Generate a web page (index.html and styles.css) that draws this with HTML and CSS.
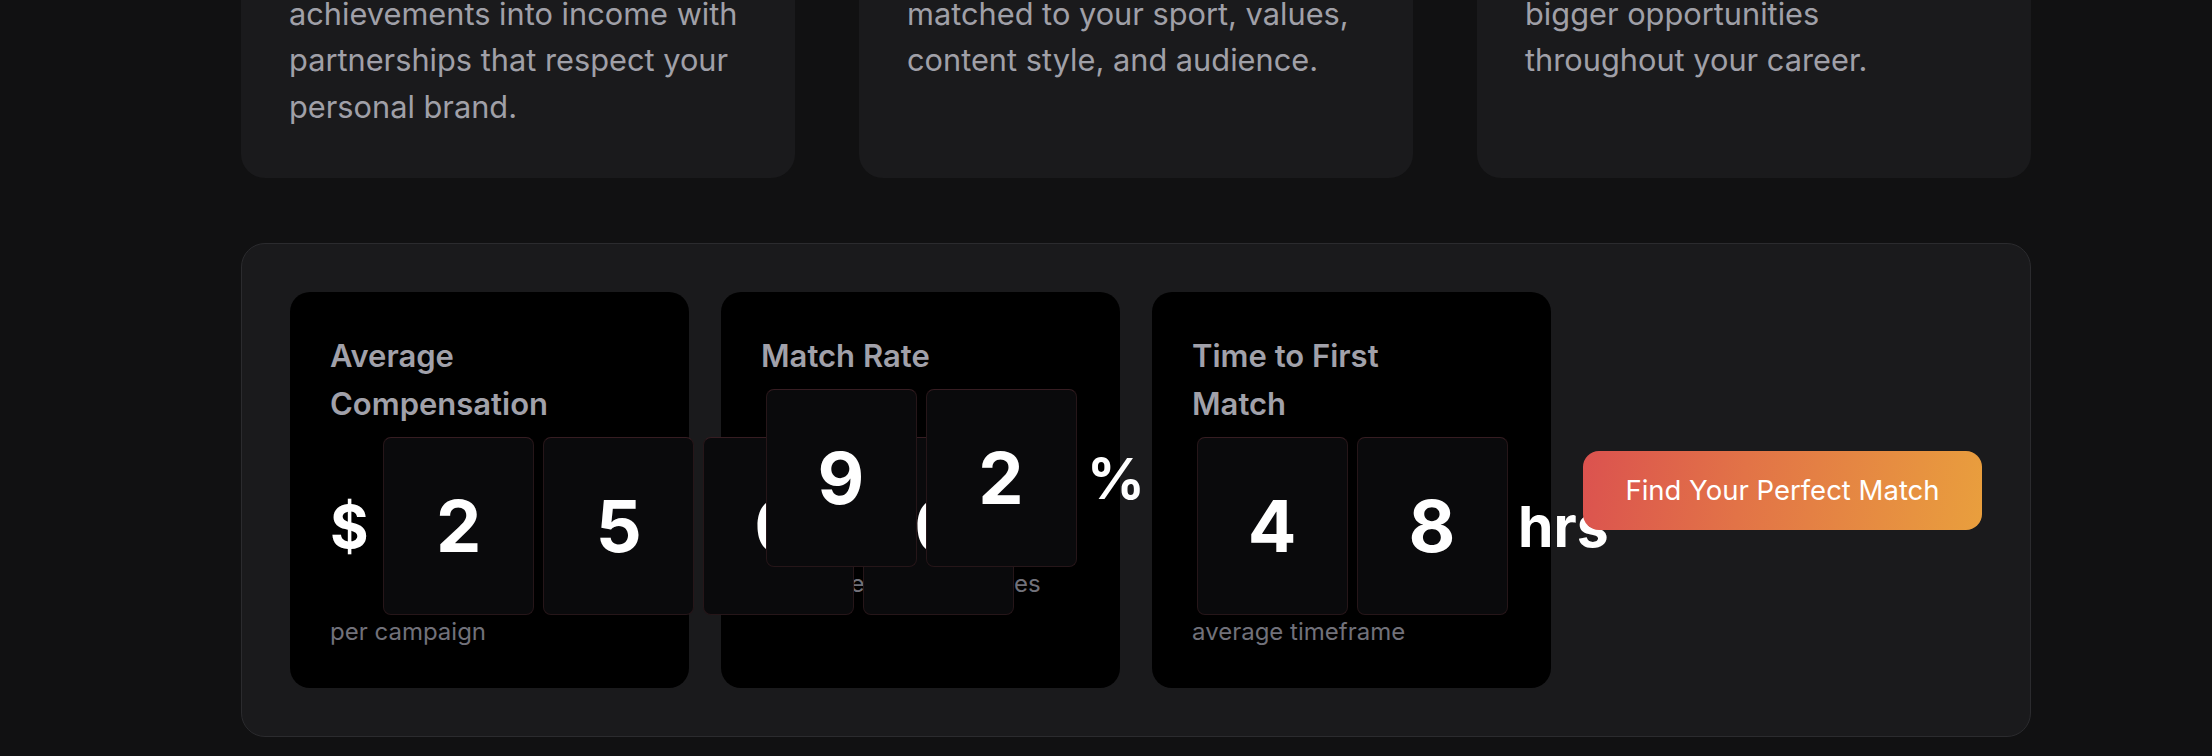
FILE: index.html
```html
<!DOCTYPE html>
<html lang="en">
<head>
<meta charset="utf-8">
<title>Athlete Partnerships</title>
<link rel="stylesheet" href="styles.css">
</head>
<body>
<div class="page">
  <section class="features">
    <article class="feature">
      <h3 class="feature-title">Monetize Your Success</h3>
      <p class="feature-text">Turn your athletic achievements into income with partnerships that respect your personal brand.</p>
    </article>
    <article class="feature">
      <h3 class="feature-title">Perfect Brand Matches</h3>
      <p class="feature-text">Discover authentic brands matched to your sport, values, content style, and audience.</p>
    </article>
    <article class="feature">
      <h3 class="feature-title">Long-Term Growth</h3>
      <p class="feature-text">Build relationships that lead to bigger opportunities throughout your career.</p>
    </article>
  </section>

  <section class="stats-panel">
    <div class="stat">
      <div class="stat-label">Average Compensation</div>
      <div class="stat-value">
        <span class="affix prefix">$</span>
        <span class="digit">2</span>
        <span class="digit">5</span>
        <span class="digit">0</span>
        <span class="digit">0</span>
      </div>
      <div class="stat-caption">per campaign</div>
    </div>
    <div class="stat">
      <div class="stat-label">Match Rate</div>
      <div class="stat-value">
        <span class="digit">9</span>
        <span class="digit">2</span>
        <span class="affix suffix">%</span>
      </div>
      <div class="stat-caption">first-time brand matches</div>
    </div>
    <div class="stat">
      <div class="stat-label">Time to First Match</div>
      <div class="stat-value">
        <span class="digit">4</span>
        <span class="digit">8</span>
        <span class="affix suffix">hrs</span>
      </div>
      <div class="stat-caption">average timeframe</div>
    </div>
    <a class="cta" href="#">Find Your Perfect Match</a>
  </section>
</div>
</body>
</html>
```
FILE: styles.css
```css
html, body {
  margin: 0;
  padding: 0;
}

body {
  background: #111112;
  font-family: Inter, "Noto Sans", "Liberation Sans", sans-serif;
  color: #fff;
  overflow: hidden;
}

.page {
  width: 1790px;
  margin-left: 241px;
}

/* feature cards (scrolled partly out of view) */
.features {
  display: grid;
  grid-template-columns: repeat(3, 1fr);
  gap: 64px;
  margin-top: -160px;
}

.feature {
  background: #1a1a1c;
  border-radius: 24px;
  padding: 48px;
}

.feature-title {
  margin: 0 0 16px;
  font-size: 32px;
  line-height: 40px;
  font-weight: 600;
  color: #fff;
}

.feature-text {
  margin: 0;
  font-size: 30.75px;
  line-height: 46.5px;
  color: #a0a0a8;
}

/* stats panel */
.stats-panel {
  margin-top: 65px;
  display: grid;
  grid-template-columns: repeat(4, 1fr);
  gap: 32px;
  padding: 48px;
  background: #1a1a1c;
  border: 1px solid #2b2b2e;
  border-radius: 24px;
}

.stat {
  min-width: 0;
  background: #000;
  border-radius: 20px;
  padding: 40px;
}

.stat-label {
  max-width: 250px;
  font-size: 31px;
  line-height: 48px;
  font-weight: 600;
  color: #a1a1aa;
}

.stat-value {
  display: flex;
  align-items: center;
  margin-top: 9px;
}

.digit {
  position: relative;
  flex: none;
  box-sizing: border-box;
  width: 151px;
  height: 178px;
  margin: 0 4.5px;
  display: flex;
  align-items: center;
  justify-content: center;
  background: #0a0a0c;
  border: 1px solid #261619;
  border-top-color: #361d22;
  border-radius: 8px;
  font-size: 72px;
  font-weight: 700;
  line-height: 1;
  color: #fff;
}

.affix {
  flex: none;
  font-size: 57px;
  font-weight: 700;
  line-height: 1;
  color: #fff;
}

.prefix {
  font-size: 59px;
  margin-right: 10px;
}

.suffix {
  margin-left: 6px;
}

.stat-caption {
  font-size: 24px;
  line-height: 33px;
  color: #71717a;
}

.cta {
  align-self: center;
  height: 79px;
  display: flex;
  align-items: center;
  justify-content: center;
  border-radius: 16px;
  background: linear-gradient(100deg, #db524f 0%, #e27347 40%, #e99f3d 100%);
  color: #fff;
  font-size: 27.5px;
  font-weight: 400;
  text-decoration: none;
}
```
